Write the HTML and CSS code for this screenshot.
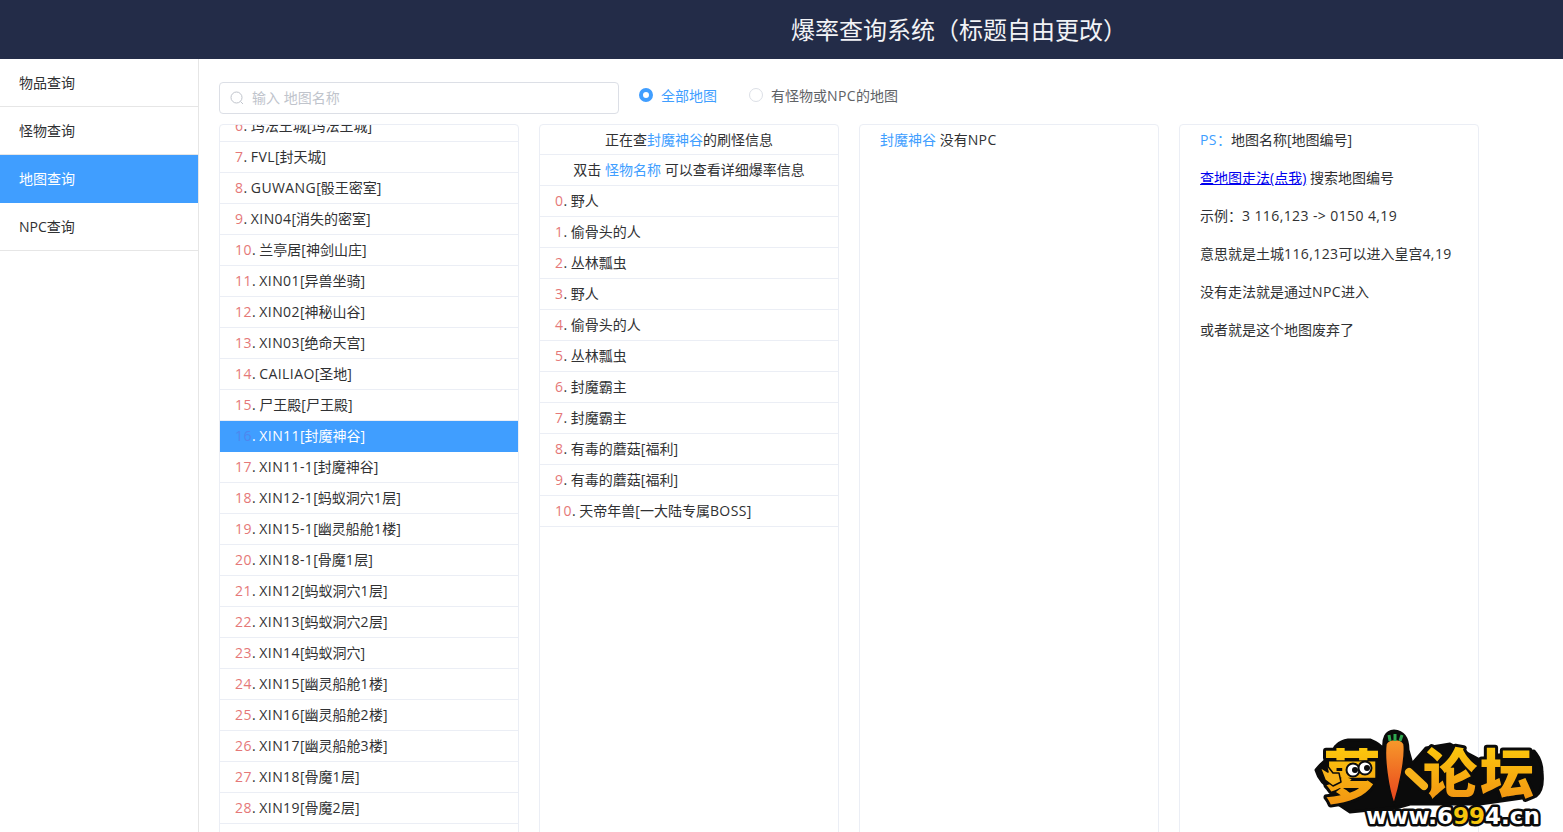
FILE: index.html
```html
<!DOCTYPE html>
<html lang="zh-CN">
<head>
    <meta charset="UTF-8">
    <title>爆率查询系统</title>
    <link rel="stylesheet" href="styles.css">
</head>
<body>
    <header class="top_bar">爆率查询系统（标题自由更改）</header>

    <div class="page_body">
        <nav class="side_menu">
            <div class="menu_item">物品查询</div>
            <div class="menu_item">怪物查询</div>
            <div class="menu_item active">地图查询</div>
            <div class="menu_item">NPC查询</div>
        </nav>

        <main class="content">
            <div class="filter_bar">
                <div class="search_box">
                    <svg class="search_icon" width="14" height="14" viewBox="0 0 14 14" fill="none" stroke="#c0c4cc" stroke-width="1">
                        <circle cx="6.5" cy="6.5" r="5.5"/>
                        <path d="M10.5 10.5L13 13"/>
                    </svg>
                    <span>输入 地图名称</span>
                </div>
                <label class="radio checked"><i class="radio_dot"></i>全部地图</label>
                <label class="radio"><i class="radio_dot"></i>有怪物或<span class="lat">NPC</span>的地图</label>
            </div>

            <div class="columns">
                <section class="card">
                    <ul class="row_list map_list">
                        <li><b>6</b>. 玛法王城[玛法王城]</li>
                        <li><b>7</b>. <span class="lat">FVL</span>[封天城]</li>
                        <li><b>8</b>. <span class="lat">GUWANG</span>[骰王密室]</li>
                        <li><b>9</b>. <span class="lat">XIN04</span>[消失的密室]</li>
                        <li><b>10</b>. 兰亭居[神剑山庄]</li>
                        <li><b>11</b>. <span class="lat">XIN01</span>[异兽坐骑]</li>
                        <li><b>12</b>. <span class="lat">XIN02</span>[神秘山谷]</li>
                        <li><b>13</b>. <span class="lat">XIN03</span>[绝命天宫]</li>
                        <li><b>14</b>. <span class="lat">CAILIAO</span>[圣地]</li>
                        <li><b>15</b>. 尸王殿[尸王殿]</li>
                        <li class="selected"><b>16</b>. <span class="lat">XIN11</span>[封魔神谷]</li>
                        <li><b>17</b>. <span class="lat">XIN11-1</span>[封魔神谷]</li>
                        <li><b>18</b>. <span class="lat">XIN12-1</span>[蚂蚁洞穴<span class="lat">1</span>层]</li>
                        <li><b>19</b>. <span class="lat">XIN15-1</span>[幽灵船舱<span class="lat">1</span>楼]</li>
                        <li><b>20</b>. <span class="lat">XIN18-1</span>[骨魔<span class="lat">1</span>层]</li>
                        <li><b>21</b>. <span class="lat">XIN12</span>[蚂蚁洞穴<span class="lat">1</span>层]</li>
                        <li><b>22</b>. <span class="lat">XIN13</span>[蚂蚁洞穴<span class="lat">2</span>层]</li>
                        <li><b>23</b>. <span class="lat">XIN14</span>[蚂蚁洞穴]</li>
                        <li><b>24</b>. <span class="lat">XIN15</span>[幽灵船舱<span class="lat">1</span>楼]</li>
                        <li><b>25</b>. <span class="lat">XIN16</span>[幽灵船舱<span class="lat">2</span>楼]</li>
                        <li><b>26</b>. <span class="lat">XIN17</span>[幽灵船舱<span class="lat">3</span>楼]</li>
                        <li><b>27</b>. <span class="lat">XIN18</span>[骨魔<span class="lat">1</span>层]</li>
                        <li><b>28</b>. <span class="lat">XIN19</span>[骨魔<span class="lat">2</span>层]</li>
                    </ul>
                </section>

                <section class="card">
                    <div class="card_head first">正在查<em>封魔神谷</em>的刷怪信息</div>
                    <div class="card_head">双击 <em>怪物名称</em> 可以查看详细爆率信息</div>
                    <ul class="row_list">
                        <li><b>0</b>. 野人</li>
                        <li><b>1</b>. 偷骨头的人</li>
                        <li><b>2</b>. 丛林瓢虫</li>
                        <li><b>3</b>. 野人</li>
                        <li><b>4</b>. 偷骨头的人</li>
                        <li><b>5</b>. 丛林瓢虫</li>
                        <li><b>6</b>. 封魔霸主</li>
                        <li><b>7</b>. 封魔霸主</li>
                        <li><b>8</b>. 有毒的蘑菇[福利]</li>
                        <li><b>9</b>. 有毒的蘑菇[福利]</li>
                        <li><b>10</b>. 天帝年兽[一大陆专属<span class="lat">BOSS</span>]</li>
                    </ul>
                </section>

                <section class="card">
                    <p class="note"><em>封魔神谷</em> 没有<span class="lat">NPC</span></p>
                </section>

                <section class="card">
                    <p class="note"><em><span class="lat">PS</span>：</em>地图名称[地图编号]</p>
                    <p class="note"><a href="#">查地图走法(点我)</a> 搜索地图编号</p>
                    <p class="note">示例：<span class="lat">3 116,123 -&gt; 0150 4,19</span></p>
                    <p class="note">意思就是土城<span class="lat">116,123</span>可以进入皇宫<span class="lat">4,19</span></p>
                    <p class="note">没有走法就是通过<span class="lat">NPC</span>进入</p>
                    <p class="note">或者就是这个地图废弃了</p>
                </section>
            </div>
        </main>
    </div>

    <!-- watermark sits over the page -->
    <svg class="watermark" width="273" height="112" viewBox="0 0 273 112">
        <defs>
            <linearGradient id="gold" x1="0" y1="0" x2="0" y2="1">
                <stop offset="0" stop-color="#ffd60a"/>
                <stop offset="1" stop-color="#f08c14"/>
            </linearGradient>
            <linearGradient id="carrot" x1="0" y1="0" x2="0" y2="1">
                <stop offset="0" stop-color="#f79a2b"/>
                <stop offset="1" stop-color="#e8401c"/>
            </linearGradient>
        </defs>
        <path d="M26 50Q34 40 42 36Q44 22 58 20L80 20Q90 24 94 30Q92 12 104 11Q118 12 118 30L122 44L136 28L160 24L190 40L200 36L244 31Q252 40 252 52Q254 70 246 76L190 84L120 84L106 88L100 88L60 92L48 84L44 70Q30 64 26 50Z" fill="#0b0b0b" stroke="#0b0b0b" stroke-width="3" stroke-linejoin="round"/>
        <text class="logo_han" x="33" y="78" font-size="58">萝</text>
        <path d="M30 47L38 52L36 44L43 53L49 53L51 62L43 66L35 60Z" fill="#f7b21a" stroke="#0b0b0b" stroke-width="1.5" stroke-linejoin="round"/>
        <circle cx="63" cy="50" r="6.5" fill="#fff" stroke="#0b0b0b" stroke-width="2"/>
        <circle cx="75" cy="48" r="6.5" fill="#fff" stroke="#0b0b0b" stroke-width="2"/>
        <circle cx="65" cy="50" r="3" fill="#0b0b0b"/>
        <circle cx="77" cy="48" r="3" fill="#0b0b0b"/>
        <path d="M96 24C99 18 111 18 114 24C116 38 109 68 104 84C98 68 94 38 96 24Z" fill="url(#carrot)" stroke="#0b0b0b" stroke-width="1.5"/>
        <path d="M100 21L99 15M105 21L105 14M110 21L112 15" stroke="#2fa84f" stroke-width="3"/>
        <path d="M119 52L134 66" stroke="#0b0b0b" stroke-width="14" stroke-linecap="round"/>
        <path d="M119 52L134 66" stroke="#f7b21a" stroke-width="8" stroke-linecap="round"/>
        <text class="logo_han" x="133" y="74" font-size="54">论</text>
        <text class="logo_han" x="190" y="74" font-size="54">坛</text>
        <text class="logo_url" x="76" y="104" font-size="23">www.6<tspan fill="#f7c50c">99</tspan>4.cn</text>
    </svg>
</body>
</html>
```

FILE: styles.css
```css
* {
    box-sizing: border-box;
}

html, body {
    height: 100%;
}

body {
    margin: 0;
    overflow: hidden;
    background: white;
    color: #303133;
    font-family: "Open Sans", "Noto Sans CJK SC", sans-serif;
    font-size: 14px;
}

.top_bar {
    height: 59px;
    padding-left: 791px;
    background: #232c48;
    color: #f2f3f6;
    font-family: "Noto Sans CJK SC", sans-serif;
    font-size: 24px;
    line-height: 57px;
}

.page_body {
    display: flex;
    height: 773px;
}

.side_menu {
    flex: none;
    width: 199px;
    border-right: 1px solid #e6e6e6;
}

.menu_item {
    height: 48px;
    padding-left: 19px;
    border-bottom: 1px solid #e6e6e6;
    line-height: 47px;
}

.menu_item.active {
    background: #409eff;
    color: white;
    border-bottom-color: #409eff;
}

.content {
    flex: 1;
    min-width: 0;
    padding: 23px 0 0 20px;
    overflow: hidden;
}

.filter_bar {
    display: flex;
    align-items: center;
    height: 32px;
    margin-bottom: 10px;
}

.search_box {
    display: flex;
    align-items: center;
    width: 400px;
    height: 32px;
    margin-right: 20px;
    padding-left: 10px;
    border: 1px solid #dcdfe6;
    border-radius: 4px;
    color: #c0c4cc;
    line-height: 28px;
}

.search_icon {
    margin-right: 8px;
}

.radio {
    display: flex;
    align-items: center;
    margin-right: 32px;
    margin-bottom: 6px;
    color: #606266;
}

.radio_dot {
    width: 14px;
    height: 14px;
    margin-right: 8px;
    border: 1px solid #dcdfe6;
    border-radius: 50%;
}

.radio.checked {
    color: #409eff;
}

.radio.checked .radio_dot {
    border: 4px solid #409eff;
    background: white;
}

.columns {
    display: flex;
    gap: 20px;
}

.card {
    flex: none;
    width: 300px;
    height: 740px;
    border: 1px solid #ebeef5;
    border-radius: 4px;
    overflow: hidden;
}

/* latin runs are a little wider than Open Sans in the original */
.lat {
    letter-spacing: 0.4px;
}

.row_list {
    margin: 0;
    padding: 0;
    list-style: none;
}

/* list is scrolled a bit, first row is half hidden */
.map_list {
    margin-top: -14px;
}

.row_list li {
    height: 31px;
    padding-left: 15px;
    border-bottom: 1px solid #ebeef5;
    line-height: 30px;
    white-space: nowrap;
}

.row_list b {
    color: #e57878;
    font-weight: normal;
    letter-spacing: 0.5px;
}

.row_list li.selected {
    background: #409eff;
    color: white;
    border-bottom-color: #409eff;
}

.row_list li.selected b {
    color: #4f86ee;
}

.card_head {
    height: 31px;
    border-bottom: 1px solid #ebeef5;
    line-height: 30px;
    text-align: center;
}

.card_head.first {
    height: 30px;
}

em {
    color: #409eff;
    font-style: normal;
}

.note {
    height: 38px;
    margin: 0;
    padding-left: 20px;
    line-height: 30px;
}

.note a {
    color: #0000ee;
}

.watermark {
    position: absolute;
    right: 0;
    bottom: 0;
}

.logo_han {
    fill: url(#gold);
    stroke: #0b0b0b;
    stroke-width: 6px;
    paint-order: stroke;
    stroke-linejoin: round;
    font-family: "Noto Sans CJK SC", sans-serif;
    font-weight: 900;
}

.logo_url {
    fill: white;
    stroke: #0b0b0b;
    stroke-width: 5px;
    paint-order: stroke;
    stroke-linejoin: round;
    font-family: "DejaVu Sans", sans-serif;
    font-weight: bold;
}
```
